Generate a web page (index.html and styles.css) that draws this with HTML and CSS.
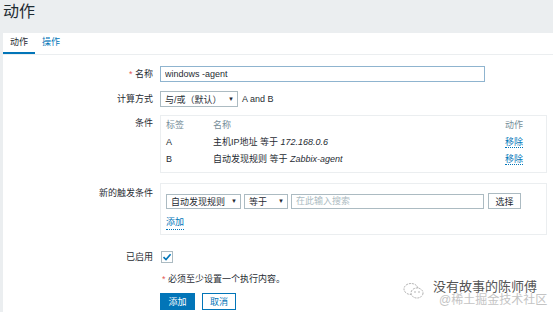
FILE: index.html
```html
<!DOCTYPE html>
<html lang="zh-CN">
<head>
    <meta charset="UTF-8">
    <meta name="viewport" content="width=device-width, initial-scale=1.0">
    <title>动作</title>
    <link rel="stylesheet" href="styles.css">
</head>
<body>
    <div class="page-title">动作</div>
    <div class="panel">
        <ul class="tabs">
            <li class="tab active">动作</li>
            <li class="tab">操作</li>
        </ul>
        <div class="form">
            <div class="row row-name">
                <div class="label"><span class="req">*</span> 名称</div>
                <input class="text-input name-input" type="text" value="windows -agent">
            </div>
            <div class="row row-calc">
                <div class="label">计算方式</div>
                <div class="select calc-select"><span>与/或（默认）</span><span class="arrow">▼</span></div>
                <span class="formula">A and B</span>
            </div>
            <div class="row row-cond">
                <div class="label">条件</div>
                <div class="box cond-box">
                    <table class="cond-table">
                        <thead>
                            <tr><th class="c-label">标签</th><th>名称</th><th class="c-action">动作</th></tr>
                        </thead>
                        <tbody>
                            <tr><td>A</td><td>主机IP地址 等于 <em>172.168.0.6</em></td><td class="c-action"><a class="link">移除</a></td></tr>
                            <tr><td>B</td><td>自动发现规则 等于 <em>Zabbix-agent</em></td><td class="c-action"><a class="link">移除</a></td></tr>
                        </tbody>
                    </table>
                </div>
            </div>
            <div class="row row-new">
                <div class="label">新的触发条件</div>
                <div class="box new-box">
                    <div class="new-controls">
                        <div class="select type-select"><span>自动发现规则</span><span class="arrow">▼</span></div>
                        <div class="select op-select"><span>等于</span><span class="arrow">▼</span></div>
                        <input class="text-input search-input" type="text" placeholder="在此输入搜索">
                        <button class="btn-plain">选择</button>
                    </div>
                    <a class="link add-link">添加</a>
                </div>
            </div>
            <div class="row row-enabled">
                <div class="label">已启用</div>
                <span class="checkbox">
                    <svg width="10" height="10" viewBox="0 0 10 10"><path d="M1.5 5.2 L4 7.6 L8.6 2.2" fill="none" stroke="#0275b8" stroke-width="1.6"/></svg>
                </span>
            </div>
            <div class="row row-note">
                <div class="label"></div>
                <span class="note"><span class="req">*</span> 必须至少设置一个执行内容。</span>
            </div>
            <div class="row row-buttons">
                <div class="label"></div>
                <button class="btn btn-primary">添加</button>
                <button class="btn btn-secondary">取消</button>
            </div>
        </div>
    </div>
    <div class="watermark">
        <svg class="wm-icon" width="22" height="18" viewBox="0 0 22 18">
            <ellipse cx="8" cy="7" rx="7" ry="5.5" fill="none" stroke="#999" stroke-width="0.8" stroke-dasharray="2 1"/>
            <ellipse cx="14" cy="11" rx="6" ry="5" fill="#fff" stroke="#999" stroke-width="0.8" stroke-dasharray="2 1"/>
            <circle cx="12" cy="10" r="0.7" fill="#999"/>
            <circle cx="16" cy="10" r="0.7" fill="#999"/>
        </svg>
        <div class="wm-text">
            <div class="wm-name">没有故事的陈师傅</div>
            <div class="wm-site">@稀土掘金技术社区</div>
        </div>
    </div>
</body>
</html>
```

FILE: styles.css
```css
* {
    box-sizing: border-box;
}
body {
    margin: 0;
    height: 312px;
    overflow: hidden;
    background-color: #ebeef0;
    color: #1f2c33;
    font-family: "Liberation Sans", "Noto Sans CJK SC", sans-serif;
    font-size: 9px;
}
.page-title {
    height: 33px;
    padding: 2px 0 0 3px;
    font-size: 16px;
    line-height: 20px;
}
.panel {
    margin-left: 3px;
    height: 279px;
    background-color: #fff;
}
.tabs {
    display: flex;
    margin: 0;
    padding: 0;
    list-style: none;
    height: 22px;
    border-bottom: 1px solid #ebeef0;
}
.tab {
    padding: 0 7px;
    height: 21px;
    line-height: 19px;
    color: #0275b8;
    border-bottom: 2px solid transparent;
}
.tab.active {
    color: #1f2c33;
    border-bottom-color: #0275b8;
}
.form {
    padding-top: 11px;
}
.row {
    display: flex;
    align-items: flex-start;
    gap: 7px;
}
.label {
    width: 150px;
    flex: none;
    text-align: right;
    line-height: 16px;
}
.req {
    color: #e45959;
}
.text-input {
    height: 16px;
    margin: 0;
    padding: 0 4px;
    border: 1px solid #acbbc2;
    font-family: inherit;
    font-size: 9px;
    color: #1f2c33;
    outline: none;
}
.text-input::placeholder {
    color: #acbbc2;
}
.name-input {
    width: 325px;
    border-color: #8fb4cf;
}
.row-name {
    margin-bottom: 9px;
}
.row-calc {
    margin-bottom: 8px;
    align-items: center;
}
.select {
    display: flex;
    justify-content: space-between;
    align-items: center;
    height: 16px;
    padding: 0 3px 0 4px;
    border: 1px solid #acbbc2;
    background-color: #fff;
}
.arrow {
    font-size: 6px;
}
.calc-select {
    width: 78px;
}
.formula {
    margin-left: -3px;
}
.box {
    width: 387px;
    border: 1px solid #ebeef0;
}
.row-cond {
    margin-bottom: 10px;
}
.cond-box {
    height: 58px;
    padding: 0 5px;
}
.cond-table {
    width: 100%;
    border-collapse: collapse;
}
.cond-table th {
    height: 17px;
    padding: 0;
    text-align: left;
    font-weight: normal;
    color: #768d99;
}
.cond-table td {
    height: 17px;
    padding: 0;
}
.cond-table .c-label {
    width: 47px;
}
.cond-table .c-action {
    width: 36px;
}
.cond-table em {
    font-style: italic;
}
.link {
    color: #0275b8;
    border-bottom: 1px dotted #0275b8;
    cursor: pointer;
}
.row-new {
    margin-bottom: 14px;
}
.row-new .label {
    padding-top: 2px;
}
.new-box {
    height: 52px;
    padding: 9px 5px 0;
}
.new-controls {
    display: flex;
    align-items: center;
}
.type-select {
    width: 75px;
    height: 15px;
    margin-right: 3px;
}
.op-select {
    width: 44px;
    height: 15px;
    margin-right: 3px;
}
.search-input {
    width: 193px;
    height: 15px;
    margin-right: 4px;
}
.btn-plain {
    width: 33px;
    height: 16px;
    padding: 0;
    border: 1px solid #acbbc2;
    background-color: #fff;
    font-family: inherit;
    font-size: 9px;
    color: #1f2c33;
}
.add-link {
    display: inline-block;
    margin-top: 6px;
    line-height: 14px;
}
.row-enabled {
    align-items: center;
    margin-bottom: 6px;
}
.checkbox {
    display: flex;
    align-items: center;
    justify-content: center;
    width: 12px;
    height: 12px;
    margin-left: 1px;
    border: 1px solid #acbbc2;
}
.note {
    line-height: 16px;
    padding-left: 2px;
}
.row-note {
    margin-bottom: 6px;
}
.btn {
    height: 17px;
    padding: 0;
    font-family: inherit;
    font-size: 9px;
    border: 1px solid #0275b8;
}
.btn-primary {
    width: 35px;
    background-color: #0275b8;
    color: #fff;
}
.btn-secondary {
    width: 34px;
    background-color: #fff;
    color: #0275b8;
}
.watermark {
    position: absolute;
    left: 403px;
    top: 279px;
    display: flex;
    gap: 8px;
}
.wm-icon {
    margin-top: 3px;
}
.wm-name {
    font-size: 13px;
    line-height: 15px;
    color: #555;
}
.wm-site {
    margin-left: 6px;
    font-size: 12px;
    line-height: 12px;
    color: #c4c4c4;
}
```
